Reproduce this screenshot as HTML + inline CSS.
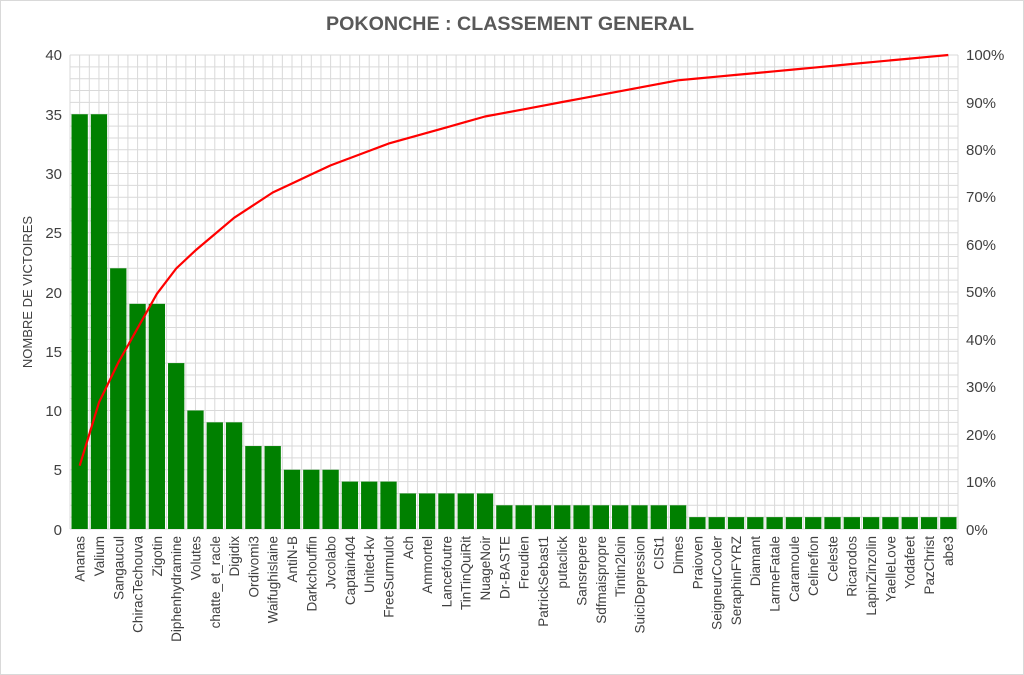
<!DOCTYPE html>
<html><head><meta charset="utf-8"><style>
html,body{margin:0;padding:0;background:#fff;}
svg{display:block;}
text{font-family:"Liberation Sans",sans-serif;fill:#404040;}
</style></head><body>
<svg id="s" width="1024" height="675" viewBox="0 0 1024 675" xmlns="http://www.w3.org/2000/svg">
<rect x="0.5" y="0.5" width="1023" height="674" fill="#fff" stroke="#d9d9d9"/>
<g id="grid"></g>
<g id="bars"></g>
<polyline id="line" fill="none" stroke="#ff0000" stroke-width="2.2" stroke-linejoin="round"/>
<text x="510" y="30" text-anchor="middle" font-size="19" font-weight="bold" style="fill:#595959" textLength="368" lengthAdjust="spacingAndGlyphs">POKONCHE : CLASSEMENT GENERAL</text>
<g font-size="15" text-anchor="end">
<text x="62" y="60">40</text><text x="62" y="120">35</text><text x="62" y="179">30</text><text x="62" y="238">25</text><text x="62" y="298">20</text><text x="62" y="357">15</text><text x="62" y="416">10</text><text x="62" y="475">5</text><text x="62" y="535">0</text>
</g>
<g font-size="15">
<text x="966" y="60">100%</text><text x="966" y="108">90%</text><text x="966" y="155">80%</text><text x="966" y="202">70%</text><text x="966" y="250">60%</text><text x="966" y="297">50%</text><text x="966" y="345">40%</text><text x="966" y="392">30%</text><text x="966" y="440">20%</text><text x="966" y="487">10%</text><text x="966" y="535">0%</text>
</g>
<text transform="translate(32,292) rotate(-90)" text-anchor="middle" font-size="13">NOMBRE DE VICTOIRES</text>
<g font-size="13.5" text-anchor="end">
<text transform="translate(84.7,536) rotate(-90)">Ananas</text>
<text transform="translate(104,536) rotate(-90)">Valium</text>
<text transform="translate(123.3,536) rotate(-90)">Sangaucul</text>
<text transform="translate(142.6,536) rotate(-90)">ChiracTechouva</text>
<text transform="translate(161.9,536) rotate(-90)">Zigotin</text>
<text transform="translate(181.2,536) rotate(-90)">Diphenhydramine</text>
<text transform="translate(200.5,536) rotate(-90)">Volutes</text>
<text transform="translate(219.8,536) rotate(-90)">chatte_et_racle</text>
<text transform="translate(239.1,536) rotate(-90)">Digidix</text>
<text transform="translate(258.4,536) rotate(-90)">Ordivomi3</text>
<text transform="translate(277.7,536) rotate(-90)">Waifughislaine</text>
<text transform="translate(297,536) rotate(-90)">AntiN-B</text>
<text transform="translate(316.3,536) rotate(-90)">Darkchouffin</text>
<text transform="translate(335.6,536) rotate(-90)">Jvcolabo</text>
<text transform="translate(354.9,536) rotate(-90)">Captain404</text>
<text transform="translate(374.2,536) rotate(-90)">United-kv</text>
<text transform="translate(393.5,536) rotate(-90)">FreeSurmulot</text>
<text transform="translate(412.8,536) rotate(-90)">Ach</text>
<text transform="translate(432.1,536) rotate(-90)">Ammortel</text>
<text transform="translate(451.4,536) rotate(-90)">Lancefoutre</text>
<text transform="translate(470.7,536) rotate(-90)">TinTinQuiRit</text>
<text transform="translate(490,536) rotate(-90)">NuageNoir</text>
<text transform="translate(509.3,536) rotate(-90)">Dr-BASTE</text>
<text transform="translate(528.6,536) rotate(-90)">Freudien</text>
<text transform="translate(547.9,536) rotate(-90)">PatrickSebast1</text>
<text transform="translate(567.2,536) rotate(-90)">putaclick</text>
<text transform="translate(586.5,536) rotate(-90)">Sansrepere</text>
<text transform="translate(605.8,536) rotate(-90)">Sdfmaispropre</text>
<text transform="translate(625.1,536) rotate(-90)">Tintin2loin</text>
<text transform="translate(644.4,536) rotate(-90)">SuiciDepression</text>
<text transform="translate(663.7,536) rotate(-90)">CISt1</text>
<text transform="translate(683,536) rotate(-90)">Dimes</text>
<text transform="translate(702.3,536) rotate(-90)">Praioven</text>
<text transform="translate(721.6,536) rotate(-90)">SeigneurCooler</text>
<text transform="translate(740.9,536) rotate(-90)">SeraphinFYRZ</text>
<text transform="translate(760.2,536) rotate(-90)">Diamant</text>
<text transform="translate(779.5,536) rotate(-90)">LarmeFatale</text>
<text transform="translate(798.8,536) rotate(-90)">Caramoule</text>
<text transform="translate(818.1,536) rotate(-90)">Celinefion</text>
<text transform="translate(837.4,536) rotate(-90)">Celeste</text>
<text transform="translate(856.7,536) rotate(-90)">Ricarodos</text>
<text transform="translate(876,536) rotate(-90)">LapinZinzolin</text>
<text transform="translate(895.3,536) rotate(-90)">YaelleLove</text>
<text transform="translate(914.6,536) rotate(-90)">Yodafeet</text>
<text transform="translate(933.9,536) rotate(-90)">PazChrist</text>
<text transform="translate(953.2,536) rotate(-90)">abe3</text>
</g>
</svg>
<script>
(function(){
var NS="http://www.w3.org/2000/svg";
var v=[35,35,22,19,19,14,10,9,9,7,7,5,5,5,4,4,4,3,3,3,3,3,2,2,2,2,2,2,2,2,2,2,1,1,1,1,1,1,1,1,1,1,1,1,1,1];
var L=70,R=958,T=55,B=529,n=v.length,w=(R-L)/n,u=(B-T)/40;
var g=document.getElementById("grid"),b=document.getElementById("bars");
function el(p,t,a){var e=document.createElementNS(NS,t);for(var k in a)e.setAttribute(k,a[k]);p.appendChild(e);}
for(var i=0;i<=40;i++){var y=B-i*u;el(g,"line",{x1:L,x2:R,y1:y,y2:y,stroke:"#d9d9d9","stroke-width":1});}
for(var j=0;j<=2*n;j++){var x=L+j*w/2;el(g,"line",{x1:x,x2:x,y1:T,y2:B,stroke:"#d9d9d9","stroke-width":1});}
var tot=0;v.forEach(function(a){tot+=a;});
var c=0,pts=[];
for(var i=0;i<n;i++){
  el(b,"rect",{x:L+i*w+1.5,y:B-v[i]*u,width:w-3,height:v[i]*u,fill:"#008000"});
  c+=v[i];pts.push((L+i*w+w/2).toFixed(1)+","+(B-(c/tot)*(B-T)).toFixed(1));
}
document.getElementById("line").setAttribute("points",pts.join(" "));
})();
</script>
</body></html>
